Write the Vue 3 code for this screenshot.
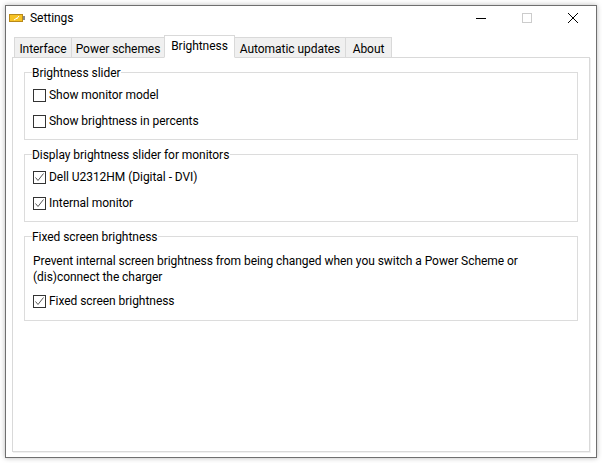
<script setup>
const tabs = [
  { label: 'Interface', w: 58 },
  { label: 'Power schemes', w: 93 },
  { label: 'Brightness', w: 71, active: true },
  { label: 'Automatic updates', w: 111 },
  { label: 'About', w: 46 }
]
const groups = [
  { title: 'Brightness slider', checks: [{ t: 'Show monitor model', on: false }, { t: 'Show brightness in percents', on: false }] },
  { title: 'Display brightness slider for monitors', checks: [{ t: 'Dell U2312HM (Digital - DVI)', on: true }, { t: 'Internal monitor', on: true }] },
  { title: 'Fixed screen brightness', lines: ['Prevent internal screen brightness from being changed when you switch a Power Scheme or', '(dis)connect the charger'], checks: [{ t: 'Fixed screen brightness', on: true }] }
]
</script>

<template>
  <div class="page">
    <div class="window">
      <div class="titlebar">
        <svg class="appicon" width="16" height="8" viewBox="0 0 16 8">
          <rect x="0.5" y="0.5" width="13" height="7" fill="#f7c325" stroke="#b8891a" />
          <rect x="14" y="2" width="2" height="4" fill="#8a8a8a" />
          <path d="M5 6 L8 4 L7.5 5 L10 2" stroke="#fff" stroke-width="1" fill="none" />
        </svg>
        <span class="title">Settings</span>
        <div class="controls">
          <svg class="ctl" width="46" height="12" viewBox="0 0 46 12"><path d="M18 6.5 H28" stroke="#000" /></svg>
          <svg class="ctl" width="46" height="12" viewBox="0 0 46 12"><rect x="18.5" y="1.5" width="9" height="9" fill="none" stroke="#ccc" /></svg>
          <svg class="ctl" width="46" height="12" viewBox="0 0 46 12"><path d="M18 1 L28 11 M28 1 L18 11" stroke="#000" /></svg>
        </div>
      </div>
      <div class="tabs">
        <div v-for="tab in tabs" :key="tab.label" class="tab" :class="{ active: tab.active }" :style="{ width: tab.w + 'px' }">{{ tab.label }}</div>
      </div>
      <div class="pane">
        <fieldset v-for="g in groups" :key="g.title" class="group" :class="{ wide: g.lines }">
          <legend>{{ g.title }}</legend>
          <p v-if="g.lines" class="desc"><span v-for="l in g.lines" :key="l">{{ l }}</span></p>
          <div class="checks" :class="{ afterdesc: g.lines }">
            <div v-for="c in g.checks" :key="c.t" class="check">
              <span class="box">
                <svg v-if="c.on" width="11" height="11" viewBox="0 0 11 11"><path d="M1.5 5.5 L4 8.5 L9.5 1.5" fill="none" stroke="#555" stroke-width="1" /></svg>
              </span>
              <span>{{ c.t }}</span>
            </div>
          </div>
        </fieldset>
      </div>
    </div>
  </div>
</template>

<style>
html, body { margin: 0; background: #fff; }
</style>

<style scoped>
.page {
  width: 602px;
  height: 463px;
  padding: 5px;
  box-sizing: border-box;
  font-family: "Roboto", "Open Sans", sans-serif;
  font-size: 12px;
  letter-spacing: -0.05px;
  color: #000;
  overflow: hidden;
}
.window {
  width: 592px;
  height: 453px;
  box-sizing: border-box;
  border: 1px solid #6f6f6f;
  background: #fff;
  box-shadow: 0 0 5px rgba(0,0,0,.28);
  display: flex;
  flex-direction: column;
  padding: 0 6px 5px 6px;
}
.titlebar {
  height: 24px;
  flex: none;
  display: flex;
  align-items: center;
  padding-left: 3px;
  margin: 0 -6px;
}
.appicon { margin-right: 5px; }
.controls { margin-left: auto; display: flex; }
.ctl { display: block; }
.tabs {
  display: flex;
  align-items: flex-end;
  height: 28px;
  flex: none;
  padding-left: 2px;
  margin-bottom: -1px;
  position: relative;
  z-index: 1;
}
.tab {
  box-sizing: border-box;
  height: 21px;
  background: #f0f0f0;
  border: 1px solid #d9d9d9;
  border-left-width: 0;
  text-align: center;
  line-height: 22px;
  white-space: nowrap;
}
.tab:first-child { border-left-width: 1px; }
.tab.active {
  height: 23px;
  background: #fff;
  border-left-width: 1px;
  border-bottom-color: #fff;
  line-height: 21px;
  margin-left: -1px;
}
.pane {
  flex: 1;
  box-sizing: border-box;
  border: 1px solid #d9d9d9;
  box-shadow: 1px 1px 0 #f0f0f0;
  padding: 6px 11px 0 11px;
  display: flex;
  flex-direction: column;
  gap: 6px;
}
.group {
  margin: 0;
  padding: 0 0 5px 8px;
  border: 1px solid #dcdcdc;
  min-width: 0;
}
.group.wide { padding-bottom: 6px; }
legend {
  padding: 0 1px 0 0;
  margin-left: -1px;
  height: 16px;
  line-height: 18px;
  background: #fff;
}
.desc {
  margin: 0;
  padding-top: 9px;
  line-height: 16px;
}
.desc span { display: block; }
.checks { padding-top: 2px; }
.checks.afterdesc { padding-top: 3px; }
.check {
  height: 26px;
  display: flex;
  align-items: center;
}
.box {
  width: 13px;
  height: 13px;
  box-sizing: border-box;
  border: 1px solid #333;
  background: #fff;
  margin-right: 3px;
  display: flex;
  align-items: center;
  justify-content: center;
  flex: none;
}
</style>
